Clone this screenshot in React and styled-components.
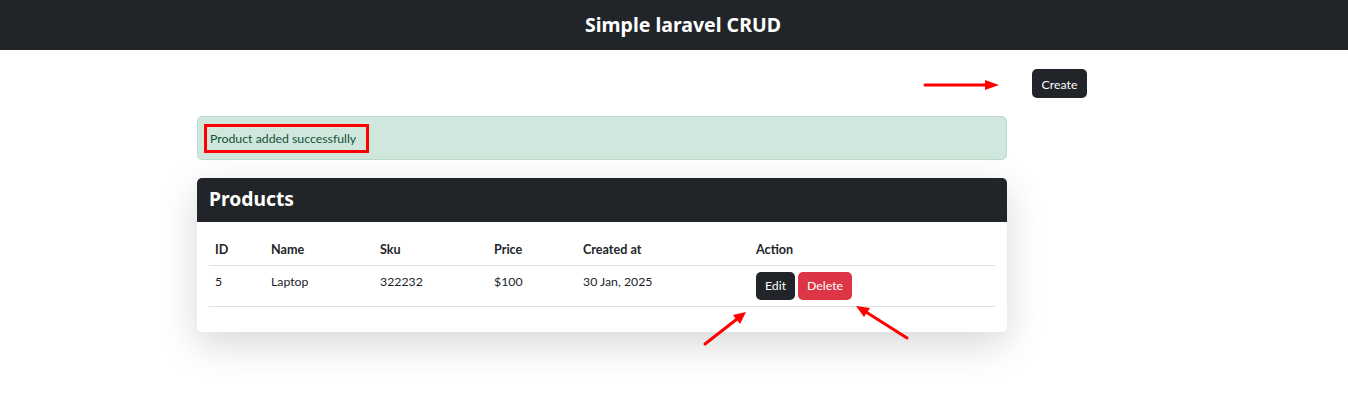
import React from "react";
import styled, { createGlobalStyle } from "styled-components";

const Global = createGlobalStyle`
  html, body { margin: 0; padding: 0; background: #fff; }
  body {
    font-family: Lato, "Noto Sans", sans-serif;
    font-size: 12.3px;
    color: #212529;
  }
  * { box-sizing: border-box; }
`;

const Page = styled.div`
  position: relative;
  min-height: 420px;
`;

const Navbar = styled.header`
  height: 50px;
  background: #212529;
  display: flex;
  align-items: center;
  justify-content: center;
`;

const Brand = styled.h1`
  margin: 0 0 2px 18px;
  color: #fff;
  font-family: "Noto Sans", sans-serif;
  font-size: 19.5px;
  font-weight: 700;
`;

const Main = styled.main`
  padding-left: 197px;
  width: 1087px;
  display: flex;
  flex-direction: column;
`;

const ActionBar = styled.div`
  display: flex;
  justify-content: flex-end;
  margin-top: 19px;
`;

const Button = styled.button`
  border: none;
  border-radius: 5px;
  height: 28px;
  padding: 0 ${(p) => p.$px || 9}px;
  font-family: inherit;
  font-size: 12.3px;
  color: #fff;
  background: ${(p) => (p.$variant === "danger" ? "#dc3545" : "#212529")};
  cursor: pointer;
`;

const CreateButton = styled(Button)`
  height: 29px;
  width: 55px;
  padding: 2px 0 0;
`;

const Alert = styled.div`
  width: 810px;
  margin-top: 18px;
  background: #d1e7dd;
  border: 1px solid #badbcc;
  border-radius: 5px;
  color: #0f5132;
  padding: 7px 6px 6px;
`;

const Highlight = styled.span`
  display: inline-block;
  border: 3px solid #ff0000;
  padding: 3px 10px 3px 3px;
  line-height: 17px;
`;

const Card = styled.section`
  width: 810px;
  margin-top: 18px;
  border-radius: 5px;
  overflow: hidden;
  background: #fff;
  box-shadow: 0 12px 38px rgba(0, 0, 0, 0.16);
`;

const CardHeader = styled.div`
  height: 44px;
  background: #212529;
  display: flex;
  align-items: center;
  padding: 0 12px 4px;
`;

const CardTitle = styled.h2`
  margin: 0;
  color: #fff;
  font-family: "Noto Sans", sans-serif;
  font-size: 19.3px;
  font-weight: 700;
`;

const CardBody = styled.div`
  padding: 12px 12px 12px;
`;

const Table = styled.table`
  width: 100%;
  border-collapse: collapse;
  margin-bottom: 13px;
`;

const Th = styled.th`
  text-align: left;
  font-weight: 700;
  font-size: 12.6px;
  padding: 6px 6px;
  height: 31px;
  border-bottom: 1px solid #dee2e6;
  width: ${(p) => p.$w}px;
`;

const Td = styled.td`
  vertical-align: top;
  padding: 6px 6px;
  line-height: 19px;
  border-bottom: 1px solid #dee2e6;
`;

const Actions = styled.div`
  display: flex;
  gap: 3px;
`;

const Overlay = styled.svg`
  position: absolute;
  left: 0;
  top: 0;
  pointer-events: none;
`;

const cols = [
  ["ID", 56],
  ["Name", 109],
  ["Sku", 114],
  ["Price", 89],
  ["Created at", 173],
  ["Action", 245],
];

export default function App() {
  return (
    <Page>
      <Global />
      <Navbar>
        <Brand>Simple laravel CRUD</Brand>
      </Navbar>
      <Main>
        <ActionBar>
          <CreateButton>Create</CreateButton>
        </ActionBar>
        <Alert>
          <Highlight>Product added successfully</Highlight>
        </Alert>
        <Card>
          <CardHeader>
            <CardTitle>Products</CardTitle>
          </CardHeader>
          <CardBody>
            <Table>
              <thead>
                <tr>
                  {cols.map(([c, w]) => (
                    <Th key={c} $w={w}>
                      {c}
                    </Th>
                  ))}
                </tr>
              </thead>
              <tbody>
                <tr>
                  <Td>5</Td>
                  <Td>Laptop</Td>
                  <Td>322232</Td>
                  <Td>$100</Td>
                  <Td>30 Jan, 2025</Td>
                  <Td>
                    <Actions>
                      <Button $px={9}>Edit</Button>
                      <Button $variant="danger" $px={9}>
                        Delete
                      </Button>
                    </Actions>
                  </Td>
                </tr>
              </tbody>
            </Table>
          </CardBody>
        </Card>
      </Main>
      <Overlay width="1348" height="420" viewBox="0 0 1348 420">
        <g stroke="#ff0000" strokeWidth="3" strokeLinecap="round">
          <line x1="925" y1="85" x2="988" y2="85" />
          <line x1="705" y1="344" x2="737" y2="319" />
          <line x1="907" y1="338" x2="866" y2="312" />
        </g>
        <g fill="#ff0000">
          <polygon points="999,85 985,80 985,90" />
          <polygon points="746,312 733,315 740,324" />
          <polygon points="856,306 864,317 870,308" />
        </g>
      </Overlay>
    </Page>
  );
}
